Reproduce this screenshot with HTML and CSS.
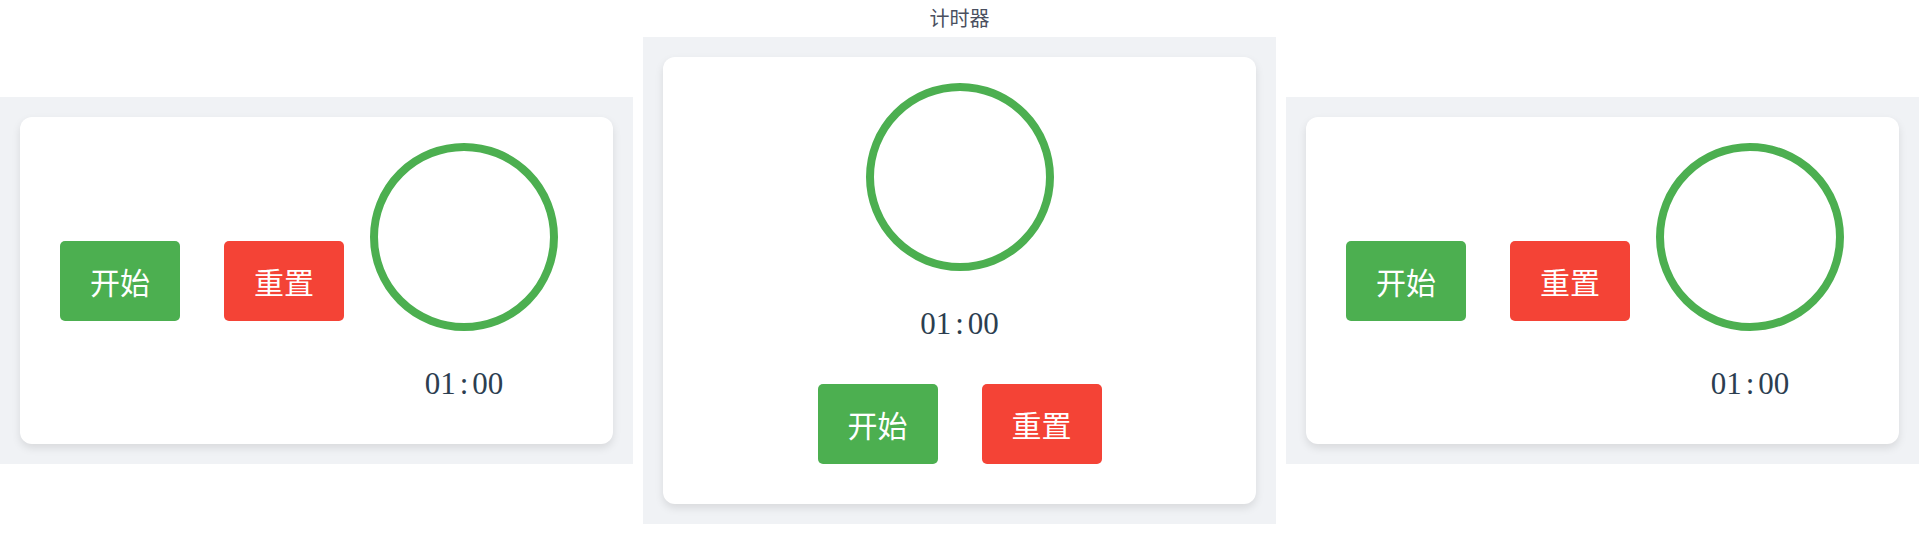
FILE: index.html
```html
<!DOCTYPE html>
<html lang="zh-CN">
<head>
<meta charset="utf-8">
<title>计时器</title>
<link rel="stylesheet" href="styles.css">
</head>
<body>
<div class="stage">
  <div class="title">计时器</div>

  <section class="panel panel-side panel-left">
    <div class="card card-row">
      <div class="controls">
        <button class="btn btn-start">开始</button>
        <button class="btn btn-reset">重置</button>
      </div>
      <div class="display">
        <svg class="ring" width="200" height="200" viewBox="0 0 200 200">
          <circle cx="100" cy="100" r="90" fill="none" stroke="#4caf50" stroke-width="8"/>
        </svg>
        <div class="time">01<span class="colon">:</span>00</div>
      </div>
    </div>
  </section>

  <section class="panel panel-mid">
    <div class="card card-col">
      <div class="display">
        <svg class="ring" width="200" height="200" viewBox="0 0 200 200">
          <circle cx="100" cy="100" r="90" fill="none" stroke="#4caf50" stroke-width="8"/>
        </svg>
        <div class="time">01<span class="colon">:</span>00</div>
      </div>
      <div class="controls controls-mid">
        <button class="btn btn-start">开始</button>
        <button class="btn btn-reset">重置</button>
      </div>
    </div>
  </section>

  <section class="panel panel-side panel-right">
    <div class="card card-row">
      <div class="controls">
        <button class="btn btn-start">开始</button>
        <button class="btn btn-reset">重置</button>
      </div>
      <div class="display">
        <svg class="ring" width="200" height="200" viewBox="0 0 200 200">
          <circle cx="100" cy="100" r="90" fill="none" stroke="#4caf50" stroke-width="8"/>
        </svg>
        <div class="time">01<span class="colon">:</span>00</div>
      </div>
    </div>
  </section>
</div>
</body>
</html>
```

FILE: styles.css
```css
* {
  box-sizing: border-box;
}

html, body {
  margin: 0;
  padding: 0;
  background: #ffffff;
  font-family: "Noto Sans CJK SC", "Noto Sans", sans-serif;
}

.stage {
  display: grid;
  grid-template-columns: 633px 633px 633px;
  grid-template-rows: 37px auto;
  column-gap: 10px;
  width: 1920px;
}

.title {
  grid-column: 2;
  grid-row: 1;
  text-align: center;
  font-size: 20px;
  line-height: 29px;
  padding-top: 3px;
  color: #4a5060;
}

.panel {
  grid-row: 2;
  background: #f0f2f5;
  padding: 20px;
  align-self: center;
}

.panel-left {
  grid-column: 1;
}

.panel-mid {
  grid-column: 2;
}

.panel-right {
  grid-column: 3;
}

.card {
  background: #ffffff;
  border-radius: 12px;
  box-shadow: 0 4px 8px rgba(0, 0, 0, 0.1);
  padding: 20px;
}

.card-row {
  display: flex;
  flex-direction: row;
  align-items: center;
}

.card-col {
  display: flex;
  flex-direction: column;
  align-items: center;
}

.controls {
  display: flex;
  gap: 4px;
}

.btn {
  width: 120px;
  height: 80px;
  margin: 0 20px;
  border: none;
  border-radius: 5px;
  color: #ffffff;
  font-family: "Noto Sans CJK SC", "Noto Sans", sans-serif;
  font-size: 30px;
  line-height: 1;
  padding: 0;
  cursor: pointer;
}

.controls-mid .btn {
  margin: 20px;
}

.btn-start {
  background: #4caf50;
}

.btn-reset {
  background: #f44336;
}

.display {
  display: flex;
  flex-direction: column;
  align-items: center;
}

.ring {
  display: block;
}

.time {
  margin: 28px 0 22px;
  font-family: "Liberation Serif", "Times New Roman", serif;
  font-size: 31px;
  line-height: 37px;
  color: #2c3e50;
}

.colon {
  margin: 0 4px;
}
```
